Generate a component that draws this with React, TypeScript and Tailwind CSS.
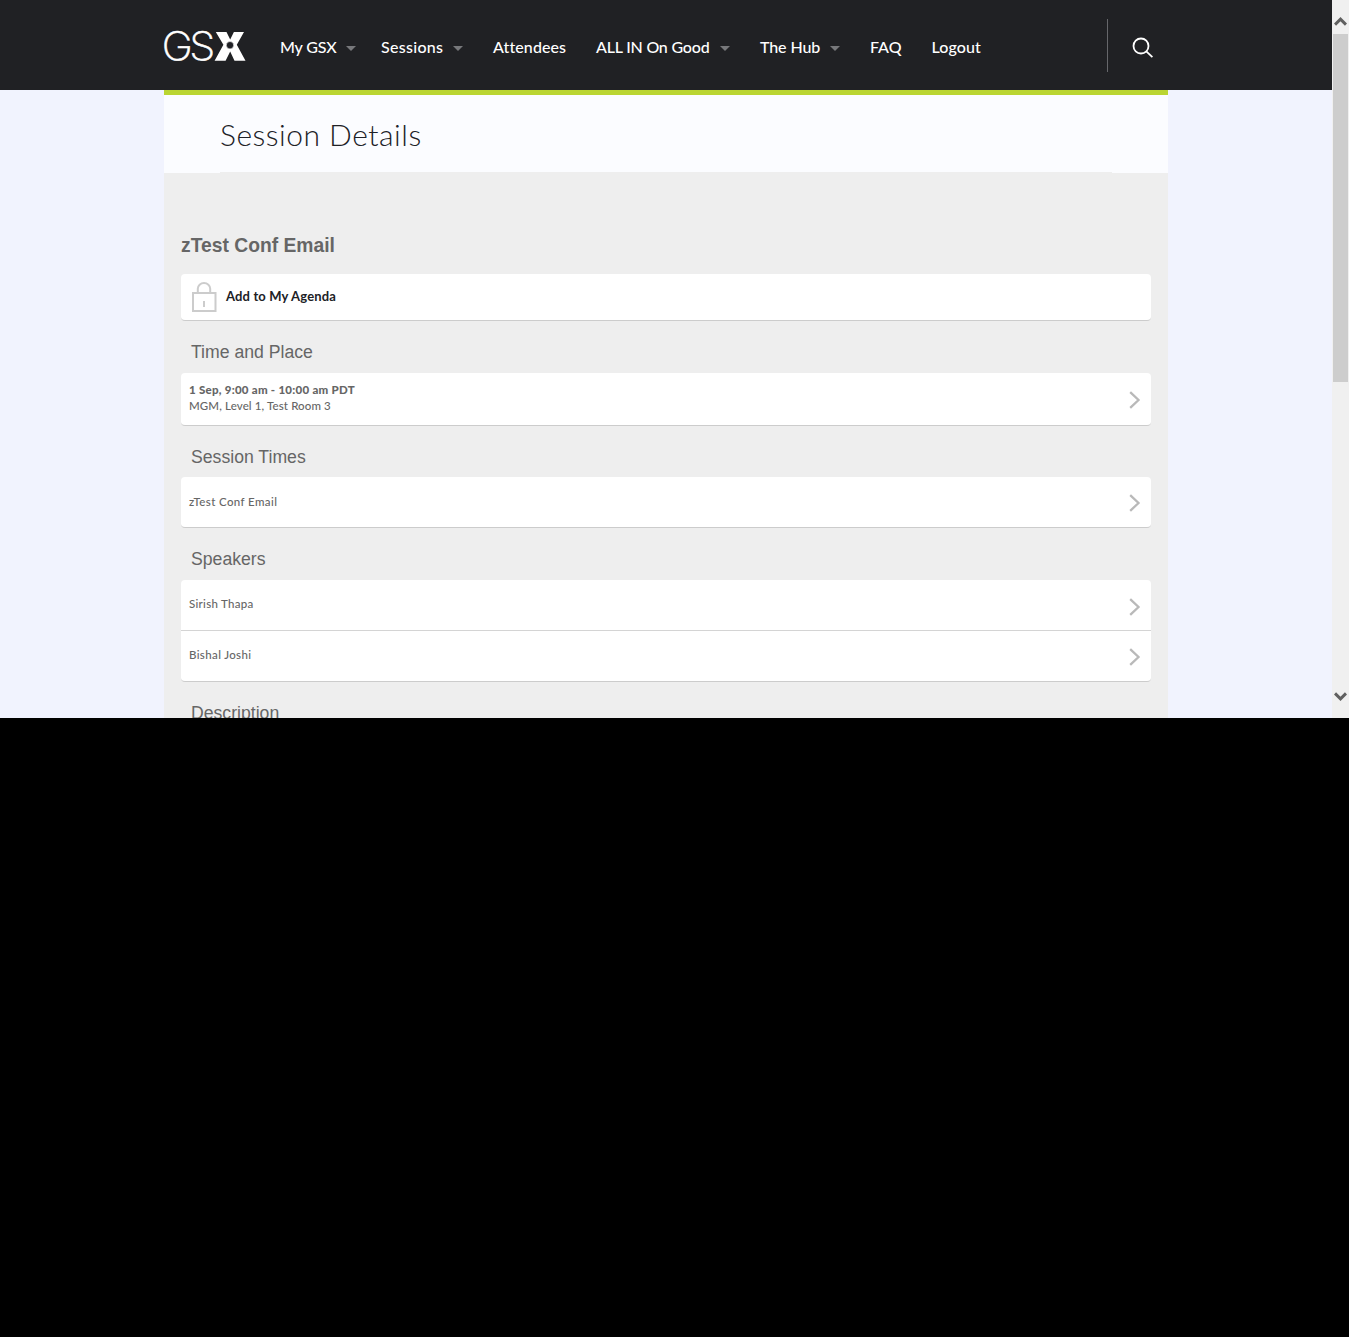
import type { ReactNode } from "react";

const nav = [
  { label: "My GSX", menu: true, box: "w-[101px]", text: "w-[57px]", font: "tracking-[-0.15px]" },
  { label: "Sessions", menu: true, box: "w-[112px]", text: "w-[63px]", font: "tracking-[0.3px]" },
  { label: "Attendees", menu: false, box: "w-[103px]", text: "w-[74px]", font: "tracking-[0.1px]" },
  { label: "ALL IN On Good", menu: true, box: "w-[164px]", text: "w-[115px]", font: "tracking-[-0.2px]" },
  { label: "The Hub", menu: true, box: "w-[110px]", text: "w-[61px]", font: "tracking-[-0.1px]" },
  { label: "FAQ", menu: false, box: "w-[61.5px]", text: "w-[33px]", font: "tracking-[0px]" },
  { label: "Logout", menu: false, box: "w-[60.5px]", text: "w-[50px]", font: "tracking-[0.1px]" },
];

function Logo() {
  return (
    <svg width="82" height="32" viewBox="0 0 82 32" className="mt-[30px] shrink-0 overflow-visible" aria-label="GSX">
      <text x="-2.2" y="30.4" transform="scale(1.06 1)" className="fill-white font-['Inter',sans-serif] text-[39.5px] font-extralight tracking-[-3.2px]" stroke="#fff" strokeWidth="0.5">
        GS
      </text>
      <path fill="#fff" d="M51.8 2H62.5L66.2 9.5L69.9 2H80L72.8 14.8L81.5 30.7H70.5L66.2 21.5L61.6 30.7H50.6L59.4 14.8Z" />
      <circle cx="66" cy="15.2" r="3.7" fill="#202126" stroke="#fff" strokeWidth="0.6" />
    </svg>
  );
}

function Chevron({ className }: { className: string }) {
  return (
    <svg width="12" height="18" viewBox="0 0 12 18" fill="none" stroke="#b9b9b9" strokeWidth="2.3" className={`mr-[10px] shrink-0 ${className}`}>
      <path d="M1.2 1.2L9.5 9L1.2 16.8" />
    </svg>
  );
}

function Heading({ children, className }: { children: ReactNode; className: string }) {
  return (
    <h3 className={`pl-[10px] font-['Liberation_Sans',sans-serif] text-[17.65px] leading-[20px] whitespace-nowrap ${className}`}>
      {children}
    </h3>
  );
}

function Card({ children, className }: { children: ReactNode; className: string }) {
  return <div className={`rounded-[4px] border-b border-[#ccc] bg-white ${className}`}>{children}</div>;
}

export default function App() {
  return (
    <div className="h-[1337px] w-[1349px] overflow-hidden bg-black font-['Lato',sans-serif]">
      <div className="flex h-[718px] overflow-hidden">
        <div className="w-[1332px] bg-[#f1f3fe]">
          <header className="flex h-[90px] bg-[#202124] pl-[164px] text-white">
            <Logo />
            <nav className="ml-[34px] flex h-[95px] w-[827px] shrink-0 items-center">
              {nav.map((n) => (
                <a key={n.label} className={`flex shrink-0 items-center ${n.box}`}>
                  <span className={`-mt-px text-[16px] font-medium whitespace-nowrap ${n.text} ${n.font}`}>{n.label}</span>
                  {n.menu && <span className="mt-px ml-[9px] border-x-[5px] border-t-[5px] border-x-transparent border-t-[#77787b]" />}
                </a>
              ))}
            </nav>
            <div className="mt-[19px] flex h-[53px] border-l border-[#66676b] pl-[24px]">
              <svg width="22" height="22" viewBox="0 0 22 22" fill="none" stroke="#fff" strokeWidth="1.8" className="mt-[18px]">
                <circle cx="9" cy="9" r="7.5" />
                <path d="M14.3 14.3L20.4 20.2" />
              </svg>
            </div>
          </header>
          <main className="ml-[164px] h-[628px] w-[1004px] overflow-hidden border-t-[5px] border-[#bad532] bg-[#eee] text-[#666]">
            <div className="h-[78px] bg-[#fbfcff] px-[56px]">
              <h1 className="h-[78px] border-b border-[#eee] pt-[19px] text-[30px] leading-[40px] font-light text-[#202126]">
                <span className="whitespace-nowrap tracking-[0.5px]">Session Details</span>
              </h1>
            </div>
            <div className="px-[17px] pt-[62px]">
              <h2 className="h-[39px] font-['Liberation_Sans',sans-serif] text-[19.3px] leading-[22px] font-bold whitespace-nowrap">zTest Conf Email</h2>
              <Card className="flex h-[47px] pl-[10px]">
                <svg width="26" height="32" viewBox="0 0 26 32" fill="none" stroke="#ccc" strokeWidth="2" className="mt-[7px]">
                  <path d="M2 12H24.5V30H2ZM6.8 12V7.8A6.2 5.8 0 0 1 19.2 7.8V12M13 20V26" />
                </svg>
                <span className="ml-[9px] text-[13px] leading-[45px] font-bold tracking-[0.15px] text-[#202126]">Add to My Agenda</span>
              </Card>
              <Heading className="mt-[21px] mb-[11px]">Time and Place</Heading>
              <Card className="flex h-[53px] items-center justify-between pl-[8px]">
                <div className="-mt-[2px] text-[11.5px] leading-[16px] whitespace-nowrap">
                  <p className="font-black tracking-[0.26px]">1 Sep, 9:00 am - 10:00 am PDT</p>
                  <p className="font-medium tracking-[0.12px]">MGM, Level 1, Test Room 3</p>
                </div>
                <Chevron className="mt-px" />
              </Card>
              <Heading className="mt-[21px] mb-[10px]">Session Times</Heading>
              <Card className="flex h-[51px] items-center justify-between pl-[8px]">
                <span className="text-[11.5px] font-medium tracking-[0.38px]">zTest Conf Email</span>
                <Chevron className="mt-[2px]" />
              </Card>
              <Heading className="mt-[21px] mb-[11px]">Speakers</Heading>
              <Card className="h-[102px]">
                <div className="flex h-[51px] items-center justify-between border-b border-[#d4d4d4] pl-[8px]">
                  <span className="-mt-[2px] text-[11.5px] font-medium tracking-[0.28px]">Sirish Thapa</span>
                  <Chevron className="mt-[3px]" />
                </div>
                <div className="flex h-[50px] items-center justify-between pl-[8px]">
                  <span className="-mt-[2px] text-[11.5px] font-medium tracking-[0.36px]">Bishal Joshi</span>
                  <Chevron className="mt-[2px]" />
                </div>
              </Card>
              <Heading className="mt-[21px]">Description</Heading>
            </div>
          </main>
        </div>
        <div className="flex w-[17px] flex-col items-center bg-[#f0f0f0]">
          <svg width="13" height="11" viewBox="0 0 13 11" fill="none" stroke="#606060" strokeWidth="3" className="mt-[16px] shrink-0">
            <path d="M1 8.6L6.5 3.1L12 8.6" />
          </svg>
          <div className="mt-[7px] h-[348px] w-[15px] shrink-0 bg-[#cdcdcd]" />
          <svg width="13" height="11" viewBox="0 0 13 11" fill="none" stroke="#606060" strokeWidth="3" className="mt-[309px] shrink-0">
            <path d="M1 2.4L6.5 7.9L12 2.4" />
          </svg>
        </div>
      </div>
    </div>
  );
}
